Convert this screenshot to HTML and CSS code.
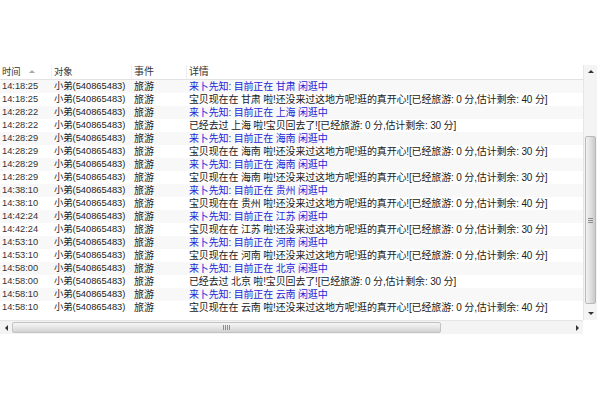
FILE: index.html
```html
<!DOCTYPE html>
<html>
<head>
<meta charset="utf-8">
<link rel="stylesheet" href="styles.css">
</head>
<body>
<div class="frame">
  <div class="list">
    <div class="row head">
      <div class="c t">时间<span class="sort"></span></div>
      <div class="c o">对象</div>
      <div class="c e">事件</div>
      <div class="c d">详情</div>
    </div>
    <div class="row alt"><div class="c t">14:18:25</div><div class="c o">小弟(540865483)</div><div class="c e">旅游</div><div class="c d blue">来卜先知: 目前正在 甘肃 闲逛中</div></div>
    <div class="row"><div class="c t">14:18:25</div><div class="c o">小弟(540865483)</div><div class="c e">旅游</div><div class="c d">宝贝现在在 甘肃 啦!还没来过这地方呢!逛的真开心![已经旅游: 0 分,估计剩余: 40 分]</div></div>
    <div class="row alt"><div class="c t">14:28:22</div><div class="c o">小弟(540865483)</div><div class="c e">旅游</div><div class="c d blue">来卜先知: 目前正在 上海 闲逛中</div></div>
    <div class="row"><div class="c t">14:28:22</div><div class="c o">小弟(540865483)</div><div class="c e">旅游</div><div class="c d">已经去过 上海 啦!宝贝回去了![已经旅游: 0 分,估计剩余: 30 分]</div></div>
    <div class="row alt"><div class="c t">14:28:29</div><div class="c o">小弟(540865483)</div><div class="c e">旅游</div><div class="c d blue">来卜先知: 目前正在 海南 闲逛中</div></div>
    <div class="row"><div class="c t">14:28:29</div><div class="c o">小弟(540865483)</div><div class="c e">旅游</div><div class="c d">宝贝现在在 海南 啦!还没来过这地方呢!逛的真开心![已经旅游: 0 分,估计剩余: 30 分]</div></div>
    <div class="row alt"><div class="c t">14:28:29</div><div class="c o">小弟(540865483)</div><div class="c e">旅游</div><div class="c d blue">来卜先知: 目前正在 海南 闲逛中</div></div>
    <div class="row"><div class="c t">14:28:29</div><div class="c o">小弟(540865483)</div><div class="c e">旅游</div><div class="c d">宝贝现在在 海南 啦!还没来过这地方呢!逛的真开心![已经旅游: 0 分,估计剩余: 30 分]</div></div>
    <div class="row alt"><div class="c t">14:38:10</div><div class="c o">小弟(540865483)</div><div class="c e">旅游</div><div class="c d blue">来卜先知: 目前正在 贵州 闲逛中</div></div>
    <div class="row"><div class="c t">14:38:10</div><div class="c o">小弟(540865483)</div><div class="c e">旅游</div><div class="c d">宝贝现在在 贵州 啦!还没来过这地方呢!逛的真开心![已经旅游: 0 分,估计剩余: 40 分]</div></div>
    <div class="row alt"><div class="c t">14:42:24</div><div class="c o">小弟(540865483)</div><div class="c e">旅游</div><div class="c d blue">来卜先知: 目前正在 江苏 闲逛中</div></div>
    <div class="row"><div class="c t">14:42:24</div><div class="c o">小弟(540865483)</div><div class="c e">旅游</div><div class="c d">宝贝现在在 江苏 啦!还没来过这地方呢!逛的真开心![已经旅游: 0 分,估计剩余: 30 分]</div></div>
    <div class="row alt"><div class="c t">14:53:10</div><div class="c o">小弟(540865483)</div><div class="c e">旅游</div><div class="c d blue">来卜先知: 目前正在 河南 闲逛中</div></div>
    <div class="row"><div class="c t">14:53:10</div><div class="c o">小弟(540865483)</div><div class="c e">旅游</div><div class="c d">宝贝现在在 河南 啦!还没来过这地方呢!逛的真开心![已经旅游: 0 分,估计剩余: 40 分]</div></div>
    <div class="row alt"><div class="c t">14:58:00</div><div class="c o">小弟(540865483)</div><div class="c e">旅游</div><div class="c d blue">来卜先知: 目前正在 北京 闲逛中</div></div>
    <div class="row"><div class="c t">14:58:00</div><div class="c o">小弟(540865483)</div><div class="c e">旅游</div><div class="c d">已经去过 北京 啦!宝贝回去了![已经旅游: 0 分,估计剩余: 30 分]</div></div>
    <div class="row alt"><div class="c t">14:58:10</div><div class="c o">小弟(540865483)</div><div class="c e">旅游</div><div class="c d blue">来卜先知: 目前正在 云南 闲逛中</div></div>
    <div class="row"><div class="c t">14:58:10</div><div class="c o">小弟(540865483)</div><div class="c e">旅游</div><div class="c d">宝贝现在在 云南 啦!还没来过这地方呢!逛的真开心![已经旅游: 0 分,估计剩余: 40 分]</div></div>
  </div>
  <div class="vscroll">
    <div class="btn"><span class="arr up"></span></div>
    <div class="track v">
      <div class="thumb vt"><span class="grip-v"></span></div>
    </div>
    <div class="btn"><span class="arr down"></span></div>
  </div>
  <div class="hscroll">
    <div class="btn h"><span class="arr left"></span></div>
    <div class="track h">
      <div class="thumb ht"><span class="grip-h"></span></div>
    </div>
    <div class="btn h"><span class="arr right"></span></div>
  </div>
  <div class="corner"></div>
</div>
</body>
</html>
```

FILE: styles.css
```css
html, body {
  margin: 0;
  padding: 0;
  background: #ffffff;
}
body {
  font-family: "Liberation Sans", "Noto Sans CJK SC", sans-serif;
  font-size: 10px;
  color: #222222;
}
.frame {
  margin-top: 65px;
  width: 597px;
  display: grid;
  grid-template-columns: 583px 14px;
  grid-template-rows: 255px 14px;
}
.list {
  overflow: hidden;
  background: #ffffff;
}
.row {
  display: flex;
  height: 13px;
  line-height: 13px;
  white-space: nowrap;
}
.row.alt {
  background: #f8f8f8;
}
.row.head {
  height: 14px;
  line-height: 14px;
  border-bottom: 1px solid #e2e2e2;
  background: #ffffff;
  color: #333333;
}
.c {
  padding-left: 2px;
  box-sizing: border-box;
  overflow: hidden;
}
.head .c {
  border-right: 1px solid #f0f0f0;
  font-size: 10px;
  letter-spacing: 0;
}
.c.t { width: 52px; color: #333333; font-size: 9.3px; }
.c.o { width: 80px; font-size: 9.3px; }
.c.e { width: 55px; }
.c.d { flex: 1; letter-spacing: -0.15px; }
.head .c.d { border-right: none; }
.blue { color: #2525d8; }
.sort {
  display: inline-block;
  width: 0;
  height: 0;
  margin-left: 8px;
  vertical-align: 2px;
  border-left: 3px solid transparent;
  border-right: 3px solid transparent;
  border-bottom: 3px solid #a8a8a8;
}
.vscroll {
  display: flex;
  flex-direction: column;
  background: #f4f4f4;
  border-left: 1px solid #e6e6e6;
}
.btn {
  height: 13px;
  display: flex;
  align-items: center;
  justify-content: center;
}
.btn.h {
  width: 12px;
  height: auto;
}
.track.v {
  flex: 1;
  padding-top: 58px;
  padding-bottom: 3px;
  display: flex;
  flex-direction: column;
}
.thumb.vt {
  flex: 1;
  margin: 0 1px;
  border: 1px solid #b9b9b9;
  border-radius: 2px;
  background: linear-gradient(to right, #f2f2f2, #dcdcdc 60%, #c9c9c9);
  display: flex;
  align-items: center;
  justify-content: center;
}
.grip-v {
  width: 5px;
  height: 5px;
  background: repeating-linear-gradient(to bottom, #8d8d8d 0, #8d8d8d 1px, transparent 1px, transparent 2px);
}
.hscroll {
  display: flex;
  background: #f4f4f4;
  border-top: 1px solid #e6e6e6;
}
.track.h {
  flex: 1;
  padding-right: 130px;
  display: flex;
  padding-top: 1px;
  padding-bottom: 1px;
}
.thumb.ht {
  flex: 1;
  border: 1px solid #c2c2c2;
  border-radius: 2px;
  background: linear-gradient(to bottom, #f6f6f6, #e2e2e2 60%, #d2d2d2);
  display: flex;
  align-items: center;
  justify-content: center;
}
.grip-h {
  width: 7px;
  height: 5px;
  background: repeating-linear-gradient(to right, #8d8d8d 0, #8d8d8d 1px, transparent 1px, transparent 2px);
}
.corner {
  background: #ffffff;
}
.arr {
  width: 0;
  height: 0;
}
.arr.up {
  border-left: 3px solid transparent;
  border-right: 3px solid transparent;
  border-bottom: 3px solid #333333;
}
.arr.down {
  border-left: 3px solid transparent;
  border-right: 3px solid transparent;
  border-top: 3px solid #333333;
}
.arr.left {
  border-top: 3px solid transparent;
  border-bottom: 3px solid transparent;
  border-right: 3px solid #333333;
}
.arr.right {
  border-top: 3px solid transparent;
  border-bottom: 3px solid transparent;
  border-left: 3px solid #333333;
}
```
